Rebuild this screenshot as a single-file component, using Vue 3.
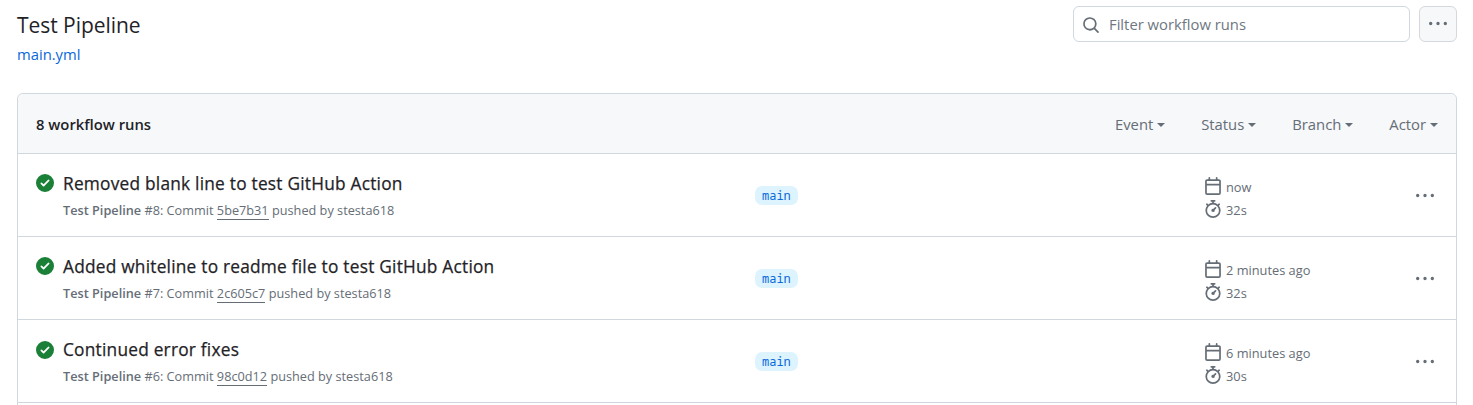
<script setup>
const filters = ['Event', 'Status', 'Branch', 'Actor']

const runs = [
  { title: 'Removed blank line to test GitHub Action', number: 8, commit: '5be7b31', age: 'now', duration: '32s' },
  { title: 'Added whiteline to readme file to test GitHub Action', number: 7, commit: '2c605c7', age: '2 minutes ago', duration: '32s' },
  { title: 'Continued error fixes', number: 6, commit: '98c0d12', age: '6 minutes ago', duration: '30s' },
]

const icons = {
  kebab: 'M8 9a1.5 1.5 0 1 0 0-3 1.5 1.5 0 0 0 0 3ZM1.5 9a1.5 1.5 0 1 0 0-3 1.5 1.5 0 0 0 0 3Zm13 0a1.5 1.5 0 1 0 0-3 1.5 1.5 0 0 0 0 3Z',
  search: 'M10.68 11.74a6 6 0 0 1-7.922-8.982 6 6 0 0 1 8.982 7.922l3.04 3.04a.749.749 0 0 1-.326 1.275.749.749 0 0 1-.734-.215ZM11.5 7a4.499 4.499 0 1 0-8.997 0A4.499 4.499 0 0 0 11.5 7Z',
  check: 'M8 16A8 8 0 1 1 8 0a8 8 0 0 1 0 16Zm3.78-9.72a.751.751 0 0 0-.018-1.042.751.751 0 0 0-1.042-.018L6.75 9.19 5.28 7.72a.751.751 0 0 0-1.042.018.751.751 0 0 0-.018 1.042l2 2a.75.75 0 0 0 1.06 0Z',
  calendar: 'M4.75 0a.75.75 0 0 1 .75.75V2h5V.75a.75.75 0 0 1 1.5 0V2h1.25c.966 0 1.75.784 1.75 1.75v10.5A1.75 1.75 0 0 1 13.25 16H2.75A1.75 1.75 0 0 1 1 14.25V3.75C1 2.784 1.784 2 2.75 2H4V.75A.75.75 0 0 1 4.75 0ZM2.5 7.5v6.75c0 .138.112.25.25.25h10.5a.25.25 0 0 0 .25-.25V7.5Zm10.75-4H2.75a.25.25 0 0 0-.25.25V6h11V3.75a.25.25 0 0 0-.25-.25Z',
  stopwatch: 'M5.75.75A.75.75 0 0 1 6.5 0h3a.75.75 0 0 1 0 1.5h-.75v1l-.001.041a6.724 6.724 0 0 1 3.464 1.435l.007-.006.75-.75a.749.749 0 0 1 1.275.326.749.749 0 0 1-.215.734l-.75.75-.006.007a6.75 6.75 0 1 1-10.548 0L2.72 5.03l-.75-.75a.751.751 0 0 1 .018-1.042.751.751 0 0 1 1.042-.018l.75.75.007.006A6.72 6.72 0 0 1 7.25 2.541V1.5H6.5a.75.75 0 0 1-.75-.75ZM8 14.5a5.25 5.25 0 1 0-.001-10.501A5.25 5.25 0 0 0 8 14.5Zm.389-6.7 1.33-1.33a.75.75 0 1 1 1.061 1.06L9.45 8.861A1.503 1.503 0 0 1 8 10.75a1.499 1.499 0 1 1 .389-2.95Z',
}
</script>

<template>
  <main class="page">
    <header class="top">
      <div class="heading">
        <h1>Test Pipeline</h1>
        <a class="file">main.yml</a>
      </div>
      <div class="tools">
        <div class="search">
          <svg class="icon" viewBox="0 0 16 16"><path :d="icons.search" /></svg>
          <span>Filter workflow runs</span>
        </div>
        <button class="more-button" aria-label="More options">
          <svg class="icon" viewBox="0 0 16 16"><path :d="icons.kebab" /></svg>
        </button>
      </div>
    </header>

    <section class="box">
      <div class="box-header">
        <strong>8 workflow runs</strong>
        <div class="filters">
          <span v-for="name in filters" :key="name" class="filter">{{ name }}<i class="caret"></i></span>
        </div>
      </div>
      <article v-for="run in runs" :key="run.number" class="row">
        <svg class="icon check" viewBox="0 0 16 16"><path :d="icons.check" /></svg>
        <div class="info">
          <div class="title">{{ run.title }}</div>
          <div class="sub">
            <b>Test Pipeline</b> #{{ run.number }}: Commit <a class="commit">{{ run.commit }}</a> pushed by stesta618
          </div>
        </div>
        <div class="branch"><span class="label">main</span></div>
        <div class="meta">
          <div class="meta-line"><svg class="icon" viewBox="0 0 16 16"><path :d="icons.calendar" /></svg><span>{{ run.age }}</span></div>
          <div class="meta-line"><svg class="icon" viewBox="0 0 16 16"><path :d="icons.stopwatch" /></svg><span>{{ run.duration }}</span></div>
        </div>
        <svg class="icon kebab" viewBox="0 0 16 16"><path :d="icons.kebab" /></svg>
      </article>
    </section>
  </main>
</template>

<style>
html,
body {
  background: #fff;
  overflow: hidden;
}
</style>

<style scoped>
.page {
  box-sizing: border-box;
  height: 405px;
  overflow: hidden;
  padding: 6px 16px 0 17px;
  font-family: "Open Sans", "Noto Sans", sans-serif;
  font-size: 14.8px;
  color: #1f2328;
  white-space: nowrap;
}
.icon {
  display: block;
  flex: none;
  width: 18px;
  height: 18px;
  fill: #656d76;
}
.top {
  display: flex;
  justify-content: space-between;
  height: 87px;
}
h1 {
  margin: 3px 0 0;
  font-size: 21px;
  line-height: 32px;
  font-weight: 400;
  letter-spacing: -0.05px;
}
.file {
  display: block;
  margin-top: 1px;
  line-height: 24px;
  color: #0969da;
}
.tools {
  display: flex;
  align-items: flex-start;
  gap: 9px;
}
.search {
  box-sizing: border-box;
  display: flex;
  align-items: center;
  gap: 9px;
  width: 337px;
  height: 36px;
  padding-left: 8px;
  border: 1px solid #d0d7de;
  border-radius: 6px;
  color: #6e7781;
}
.search .icon {
  margin-top: 2px;
}
.more-button {
  box-sizing: border-box;
  display: flex;
  align-items: center;
  justify-content: center;
  width: 38px;
  height: 36px;
  padding: 0;
  border: 1px solid #d5d8dc;
  border-radius: 6px;
  background: #f6f8fa;
}
.box {
  border: 1px solid #d0d7de;
  border-radius: 6px;
  height: 400px;
}
.box-header {
  display: flex;
  align-items: center;
  justify-content: space-between;
  height: 59px;
  padding: 0 18px;
  border-bottom: 1px solid #d0d7de;
  border-radius: 6px 6px 0 0;
  background: #f6f8fa;
}
.box-header strong {
  font-weight: 600;
}
.filters {
  display: flex;
  gap: 36px;
  color: #656d76;
}
.filter {
  display: flex;
  align-items: center;
}
.caret {
  margin: 3px 0 0 4px;
  border: 4.5px solid transparent;
  border-top-color: #656d76;
  border-bottom: 0;
}
.row {
  box-sizing: border-box;
  display: grid;
  grid-template-columns: 27px 692px 449px 212px 18px;
  height: 83.12px;
  padding-left: 18px;
  border-bottom: 1px solid #d0d7de;
}
.check {
  margin-top: 20.3px;
  fill: #1a7f37;
}
.title {
  margin-top: 17px;
  font-size: 17.3px;
  line-height: 26px;
  font-weight: 500;
  letter-spacing: 0.23px;
  -webkit-text-stroke: 0.25px currentColor;
}
.sub {
  margin-top: 3px;
  font-size: 12.7px;
  line-height: 20px;
  letter-spacing: 0.015px;
  color: #656d76;
}
.sub b {
  font-weight: 600;
}
.commit {
  border-bottom: 1px solid #656d76;
}
.label {
  display: inline-block;
  margin-top: 32px;
  padding: 0 7px;
  border-radius: 7px;
  background: #ddf4ff;
  color: #0969da;
  font-family: "Noto Sans Mono", "DejaVu Sans Mono", monospace;
  font-size: 12px;
  line-height: 19px;
}
.meta {
  padding-top: 23px;
  font-size: 12.8px;
  color: #656d76;
}
.meta-line {
  display: flex;
  align-items: center;
  gap: 4px;
  height: 18px;
  margin-bottom: 5px;
}
.meta-line span {
  padding-top: 2px;
}
.kebab {
  margin-top: 33px;
}
</style>
